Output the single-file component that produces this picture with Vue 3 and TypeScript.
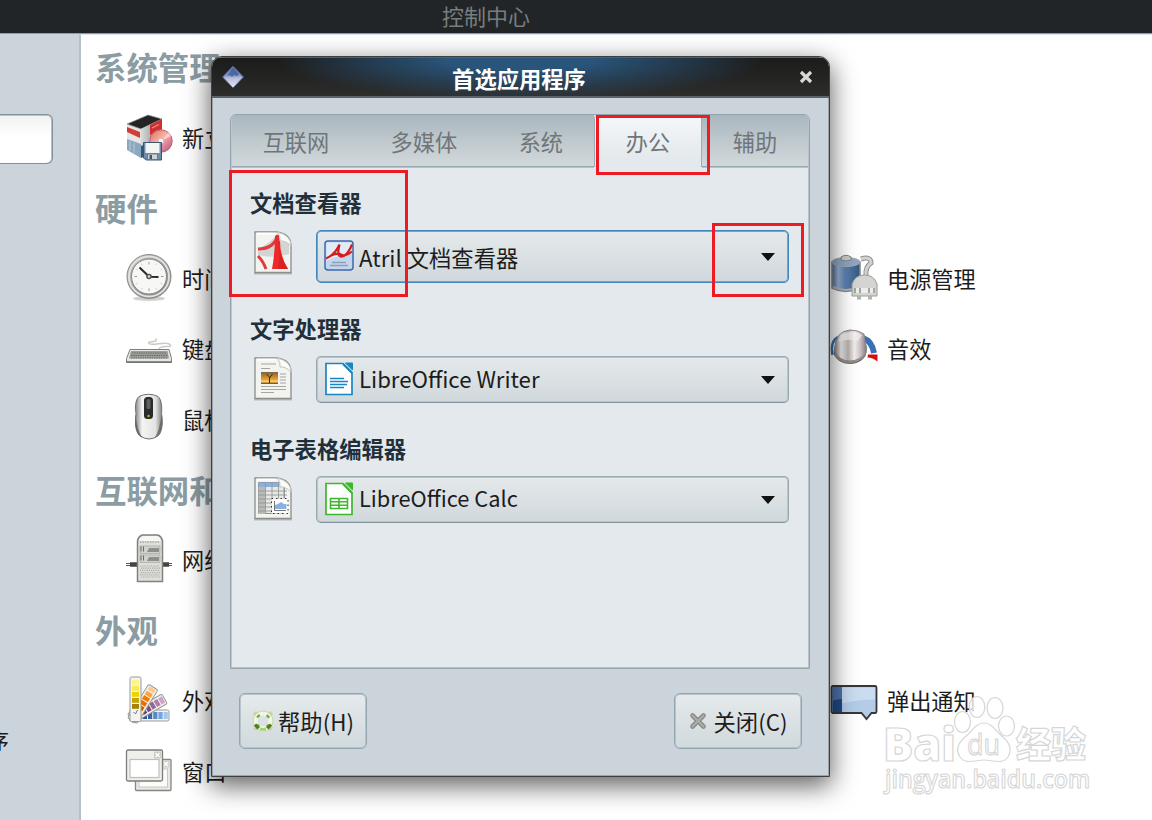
<script setup lang="ts">
interface Entry { label: string; icon: string }
interface Row { heading?: string; left?: Entry; right?: Entry }

const rows: Row[] = [
  { heading: '系统管理' },
  { left: { label: '新立', icon: 'package' } },
  { heading: '硬件' },
  { left: { label: '时间', icon: 'clock' }, right: { label: '电源管理', icon: 'power' } },
  { left: { label: '键盘', icon: 'keyboard' }, right: { label: '音效', icon: 'sound' } },
  { left: { label: '鼠标', icon: 'mouse' } },
  { heading: '互联网和' },
  { left: { label: '网络', icon: 'network' } },
  { heading: '外观' },
  { left: { label: '外观', icon: 'theme' }, right: { label: '弹出通知', icon: 'notify' } },
  { left: { label: '窗口', icon: 'windows' } },
]

const entriesOf = (r: Row): Entry[] => [r.left, r.right].filter((e): e is Entry => !!e)

const swatches = [
  { angle: 90, colors: ['#2a4f8d', '#3465a4', '#5888c5', '#75a3db', '#a4c7ef'] },
  { angle: 60, colors: ['#5c3566', '#75507b', '#906a99', '#ad7fa8', '#caa5c8'] },
  { angle: 32, colors: ['#ce5c00', '#e66f00', '#f57900', '#fca347', '#fdc98d'] },
  { angle: 0, colors: ['#a48200', '#c7a300', '#edd400', '#fce94f', '#fff38b'] },
]

const tabs = ['互联网', '多媒体', '系统', '办公', '辅助']
const activeTab = '办公'

const sections = [
  { title: '文档查看器', app: 'Atril 文档查看器', kind: 'pdf', focused: true },
  { title: '文字处理器', app: 'LibreOffice Writer', kind: 'writer', focused: false },
  { title: '电子表格编辑器', app: 'LibreOffice Calc', kind: 'calc', focused: false },
]
</script>

<template>
  <div class="screen">
    <svg class="defs" width="0" height="0">
      <defs>
        <linearGradient id="metal" x1="0" y1="0" x2="1" y2="1"><stop offset="0" stop-color="#c9cac8" /><stop offset=".5" stop-color="#9c9e9b" /><stop offset="1" stop-color="#7b7e7a" /></linearGradient>
        <linearGradient id="mouseBody" x1="0" y1="0" x2="1" y2="0"><stop offset="0" stop-color="#858985" /><stop offset=".25" stop-color="#f4f4f3" /><stop offset=".75" stop-color="#e3e3e2" /><stop offset="1" stop-color="#7a7e7b" /></linearGradient>
        <linearGradient id="battery" x1="0" y1="0" x2="1" y2="0"><stop offset="0" stop-color="#4a6d9d" /><stop offset=".22" stop-color="#9bb3d2" /><stop offset=".45" stop-color="#5e83b5" /><stop offset="1" stop-color="#33577f" /></linearGradient>
        <linearGradient id="knob" x1="0" y1="0" x2="1" y2="0"><stop offset="0" stop-color="#858280" /><stop offset=".2" stop-color="#eceae8" /><stop offset=".42" stop-color="#b3aeab" /><stop offset=".62" stop-color="#f1efed" /><stop offset=".82" stop-color="#c7b8c2" /><stop offset="1" stop-color="#777471" /></linearGradient>
        <linearGradient id="disc" x1="0" y1="0" x2="1" y2="1"><stop offset="0" stop-color="#e0665f" /><stop offset=".45" stop-color="#f5b5a0" /><stop offset=".65" stop-color="#e58b9b" /><stop offset="1" stop-color="#a54f86" /></linearGradient>
        <linearGradient id="boxSide" x1="0" y1="0" x2="1" y2="0"><stop offset="0" stop-color="#d9dada" /><stop offset="1" stop-color="#7d7f80" /></linearGradient>
        <linearGradient id="sunset" x1="0" y1="0" x2="0" y2="1"><stop offset="0" stop-color="#7b633c" /><stop offset=".6" stop-color="#e99b2d" /><stop offset=".8" stop-color="#ffce62" /><stop offset="1" stop-color="#54401f" /></linearGradient>
        <linearGradient id="gem" x1="0" y1="0" x2="0" y2="1"><stop offset="0" stop-color="#5f76ae" /><stop offset=".45" stop-color="#8d9bc6" /><stop offset=".55" stop-color="#b6bedb" /><stop offset="1" stop-color="#e4e7f2" /></linearGradient>
      </defs>
    </svg>

    <header class="topbar">控制中心</header>
    <div class="body">
      <aside class="side">
        <div class="search"></div>
        <div class="side-link">序</div>
      </aside>
      <main class="panel">
        <div v-for="(r, i) in rows" :key="i" class="row">
          <h2 v-if="r.heading" class="group">{{ r.heading }}</h2>
          <template v-else>
            <div v-for="e in entriesOf(r)" :key="e.label" class="entry">
              <svg class="ico" viewBox="0 0 48 48" width="48" height="48">
                <g v-if="e.icon === 'package'">
                  <path d="M2 10L16 15V44L2 36z" fill="#e4e5e5" /><path d="M2 10L23 1l14 4-21 10z" fill="#242424" stroke="#999" stroke-width=".7" />
                  <path d="M16 15L37 5v27L16 44z" fill="url(#boxSide)" /><path d="M2 13l13 5v6L2 18z" fill="#d33b37" /><path d="M25 11l12-6v10l-12 6z" fill="#cf2f2e" /><path d="M27 14l7-3.500" stroke="#ef8d88" stroke-width="1.200" />
                  <path d="M2 25l14 5v14L2 36z" fill="#8ca8c1" /><path d="M16 32l12-5v12l-12 5z" fill="#35597c" /><path d="M5 27v10M9 29v10" stroke="#b8c9d7" />
                  <circle cx="36" cy="27" r="11.2" fill="url(#disc)" stroke="#bd6275" /><path d="M36 27l10-5-2-4z" fill="#fff" opacity=".5" /><circle cx="36" cy="27" r="3" fill="#fbeff0" stroke="#dca7b0" />
                  <path d="M18.500 28.500h18v17.500h-15l-3-2z" fill="#6f8dab" stroke="#3c566f" /><path d="M20.500 29h14v10H20.500z" fill="#f3f4f4" /><path d="M22.500 40h10v5.500h-10z" fill="#cfd3d5" stroke="#536577" stroke-width=".7" /><path d="M24.500 41h2.500v4h-2.500z" fill="#40566d" />
                </g>
                <g v-else-if="e.icon === 'clock'">
                  <ellipse cx="24" cy="44.500" rx="16" ry="2.500" fill="#000" opacity=".18" /><circle cx="24" cy="22.500" r="22" fill="url(#metal)" stroke="#8b8d8a" /><circle cx="24" cy="22.500" r="20" fill="none" stroke="#e1e2e0" stroke-width="2" /><circle cx="24" cy="22.500" r="17.500" fill="#f7f7f5" stroke="#858783" />
                  <path d="M24 8v2.500M24 34.500v2.500M9.500 22.500h2.500M36 22.500h2.500" stroke="#999" /><path d="M16.500 9.500l.8 1.400M31.500 9.500l-.8 1.400M11 15l1.400.8M37 15l-1.400.8M11 30l1.400-.8M37 30l-1.400-.8M16.500 35.500l.8-1.400M31.500 35.500l-.8-1.400" stroke="#ccc" />
                  <path d="M24 22.500L14.500 13.500M24 22.800L33.500 23" stroke="#252b2d" stroke-width="2" /><circle cx="24" cy="22.500" r="2.800" fill="#555" /><circle cx="24" cy="22.500" r="1.200" fill="#ddd" />
                </g>
                <g v-else-if="e.icon === 'keyboard'">
                  <path d="M34 24c2-5 14 0 11-4.500-3-4-18 2-21-1-2-3 9 0 7-5" fill="none" stroke="#c8cac5" stroke-width="1.500" />
                  <path d="M5 24.500h39l2.500 9v4h-45v-4z" fill="#e7e8e4" stroke="#7c7f7b" /><path d="M6 26h36.500l1.500 7.500H4z" fill="#9b9d99" /><path d="M7 28h35M6 30.500h37M6 33h37" stroke="#6a6d69" stroke-dasharray="1.500 .8" /><path d="M1.500 37h45" stroke="#6c6f6b" stroke-width="1.500" />
                </g>
                <g v-else-if="e.icon === 'mouse'">
                  <path d="M14 1.500Q23.500-3 33 1.500c4 3 4 13 3.500 17 2 10 0 19-3 22q-9.500 7-19 0c-3-3-5-12-3.500-22C10 14 10 5 14 1.500z" fill="url(#mouseBody)" stroke="#6d716e" /><path d="M10.500 20q2 16 7 23-7-3-7.500-14zM36.500 20q-2 16-7 23 7-3 7.500-14z" fill="#5f6763" opacity=".8" />
                  <rect x="19" y="2" width="9" height="22" rx="3.500" fill="#2a2c2b" /><rect x="21.500" y="4" width="4" height="10" rx="1.500" fill="#5d605f" /><circle cx="23.500" cy="21" r="1.200" fill="#c8ae1d" />
                </g>
                <g v-else-if="e.icon === 'network'">
                  <path d="M1 27.500h11M1 29.500h11M37 27.500h10M37 29.500h10" stroke="#555854" /><path d="M5 28.500h7M37 28.500h7" stroke="#424642" stroke-width="4.500" />
                  <path d="M12.500 5q1-5 5-6h15q4 1 5 6v40.500h-25z" fill="#dedfda" stroke="#80827d" stroke-width="1.500" /><path d="M14 5q1-4 4-5h14q3 1 4 5z" fill="#f6f6f3" /><path d="M15 6h20" stroke="#8f918d" stroke-dasharray="1.500 1" />
                  <path d="M15 10h20v7.500H15zM15 19h20v7.500H15z" fill="#d0d2cc" stroke="#a5a7a2" stroke-width=".7" /><path d="M16 10.500v5M18.500 10.500v5M16 19.500v5M18.500 19.500v5" stroke="#676a65" /><path d="M22 16l2-4h10v4zM22 25l2-4h10v4z" fill="#8d908a" />
                  <path d="M15 30h20M16 32.200h19M15 34.400h20M16 36.600h19M15 38.800h20M16 41h19" stroke="#a9aba6" stroke-width="1.200" stroke-dasharray="1.200 1" />
                </g>
                <g v-else-if="e.icon === 'theme'">
                  <g v-for="s in swatches" :key="s.angle" :transform="`rotate(${s.angle} 10.500 38.500)`">
                    <rect x="5" :y="s.angle ? 5 : 0" width="11" :height="s.angle ? 39.5 : 44.500" rx="1.500" fill="#f3f3ef" stroke="#999b96" /><rect v-for="(c, j) in s.colors" :key="c" x="7" :y="27 - j * (s.angle ? 5.2 : 6)" width="7" :height="s.angle ? 4.2 : 4.800" :fill="c" />
                  </g>
                  <path d="M8.500 35l2 2 2-4" fill="none" stroke="#777" />
                </g>
                <g v-else-if="e.icon === 'windows'">
                  <rect x="10.500" y="12.500" width="35.500" height="31" rx="1" fill="#e8e9e5" stroke="#848681" stroke-width="1.300" /><rect x="14" y="22" width="28.500" height="18" fill="#fcfcfb" stroke="#c7c8c2" /><rect x="38" y="13.500" width="6.500" height="7" fill="#d2d3cd" /><path d="M39 15l4 4m0-4l-4 4" stroke="#fff" stroke-width="1.300" />
                  <rect x="1.500" y="3" width="36" height="31" rx="1.500" fill="#eeefeb" stroke="#7b7d78" stroke-width="1.300" /><rect x="5" y="12.500" width="29" height="18" fill="#fff" stroke="#bfc1b9" stroke-width="1.200" /><rect x="29" y="4.500" width="7" height="7" fill="#cbccc6" /><path d="M30.500 6l4 4m0-4l-4 4" stroke="#fff" stroke-width="1.300" />
                </g>
                <g v-else-if="e.icon === 'power'">
                  <path d="M31 5q10-3 10 4-6 4-5 13" fill="none" stroke="#8c8e8b" stroke-width="5" /><path d="M31 5q10-3 10 4-6 4-5 13" fill="none" stroke="#d1d2cf" stroke-width="3" />
                  <path d="M2 8q14-7 28 0v26q-14 7-28 0z" fill="url(#battery)" stroke="#86898a" stroke-width="1.500" /><ellipse cx="16" cy="8" rx="14" ry="4.500" fill="#8ea6c5" stroke="#a6abad" /><path d="M3 33q13 6 26 0" stroke="#aeb2b2" stroke-width="2" fill="none" /><path d="M11 3q5-3.500 10 0v3q-5 2-10 0z" fill="#c8cac9" stroke="#7f8280" />
                  <path d="M22 42V30q3-9 12.500-9T47 30v12z" fill="#d4d5d2" stroke="#9a9c98" /><path d="M24 34h21v5h-21z" fill="#a3a5a1" /><path d="M26 34h3v5h-3zM31 34h7v5h-7zM40 34h3v5h-3z" fill="#ededeb" /><path d="M27 42h4v3.500h-4zM38 42h4v3.500h-4z" fill="#b2b4b0" />
                </g>
                <g v-else-if="e.icon === 'sound'">
                  <path d="M2.500 30Q0 16 8 12" fill="none" stroke="#386eac" stroke-width="2.500" /><path d="M33 13q9 3 11 15" fill="none" stroke="#386fb5" stroke-width="6" /><path d="M38 29.500l9.500 0v7q-5-4-10-4z" fill="#d6100e" />
                  <ellipse cx="20" cy="27" rx="16" ry="11.500" fill="#92908d" stroke="#6e6c69" /><path d="M4.500 25Q5 6 20 5q8 0 14 4l1 8q3 6 1 11-7 8-16 8-12 0-15.500-11z" fill="url(#knob)" stroke="#8b8885" /><path d="M8 17Q10 7 20 7q8 0 12 3-2 3-4 6-9-3-20 1z" fill="#f5f3f0" opacity=".65" />
                </g>
                <g v-else>
                  <path d="M3 9h42q1.500 0 1.500 2v23q0 2-1.500 2h-3.500l-5 6-5-6H3q-1.500 0-1.500-2V11q0-2 1.500-2z" fill="#b4cce8" stroke="#34383b" stroke-width="1.800" /><path d="M12 10.500h33v12q-17 0-33 4z" fill="#c9dcf0" /><path d="M2.500 10h9.500v25H2.500z" fill="#204a87" /><path d="M2.500 10h9.500v12q-5 0-9.500 2z" fill="#4f73a9" />
                </g>
              </svg>
              <span>{{ e.label }}</span>
            </div>
          </template>
        </div>
      </main>
    </div>

    <section class="dialog">
      <div class="titlebar">
        <svg class="gem" width="24" height="24" viewBox="0 0 24 24"><path d="M12 1l10.500 11L12 23 1.500 12z" fill="url(#gem)" stroke="#4d5680" /><path d="M12 2.500l6 6.500-2 2-3-1-2 2-2-2-3 1z" fill="#4a67a4" /></svg>
        <span>首选应用程序</span>
        <svg class="x" width="14" height="14" viewBox="0 0 14 14"><path d="M2 2l10 10M12 2L2 12" stroke="#d8d8d8" stroke-width="3.200" /></svg>
      </div>
      <div class="content">
        <div class="notebook">
          <nav class="tabs">
            <div v-for="t in tabs" :key="t" class="tab" :class="{ active: t === activeTab, wide: t.length === 3 }">{{ t }}</div>
          </nav>
          <div class="page">
            <div v-for="s in sections" :key="s.kind" class="section" :class="{ focused: s.focused }">
              <h3>{{ s.title }}</h3>
              <div class="choice">
                <svg class="doc" width="40" height="46" viewBox="0 0 40 46">
                  <path d="M1 42.500h38v2H1z" fill="#000" opacity=".2" />
                  <path d="M2 2h22q14 2 14 14v26.500H2z" fill="#f3f3f0" stroke="#8b8e89" stroke-width="1.300" /><path d="M3.500 3.500h20" stroke="#fff" stroke-width="2" />
                  <g v-if="s.kind === 'pdf'"><path d="M5 19q15-8 18-14 5 9 13 7v12q-15 5-31 1z" fill="#d4d5d3" /><path d="M25 5q-4 14-20 14M5 26q5 5 8 13" fill="none" stroke="#e13b3b" stroke-width="3" /><path d="M22 6q4-3 5 5 0 15 8 28H19Q22 23 22 6z" fill="#ee2929" /><path d="M25 12q3 14 0 27h10q-9-13-9-27z" fill="#d82323" /></g>
                  <g v-else-if="s.kind === 'writer'"><path d="M8 8h15M8 12.500h9M27 18h6M27 21h6M27 24h6M27 27h6M8 30.500h25M8 33.500h25M8 36.500h13" stroke="#a4a6a3" /><rect x="8" y="16" width="17" height="12" fill="url(#sunset)" /><path d="M16.500 27v-6l-3-3m3 4l3-4" stroke="#342914" fill="none" /></g>
                  <g v-else><path d="M5.500 6.500h21l5 5v26h-26z" fill="#e8e9e7" stroke="#8d908d" /><path d="M5.500 6.500h21v4.500h-21z" fill="#8cafdc" /><path d="M5.500 11h7v27h-7z" fill="#b9bbb8" /><path d="M5 15h29M5 19h29M5 23h29M5 27h14M5 31h14M5 35h14M12.500 7v31M19 7v31M25.500 7v16M31 11v12" stroke="#959895" stroke-width=".9" /><rect x="18.500" y="22.500" width="16.500" height="15" fill="#fff" stroke="#333" stroke-dasharray="1.500 3" /><path d="M22 33v-4l3-1 3-2 3 2h2.500v5z" fill="#8ab1df" /><path d="M21.500 25v9.500h11.500" fill="none" stroke="#777" /></g>
                  <path d="M24 2q4 4 3 9 5-1 11 5Q38 5 24 2z" fill="#fbfbf9" stroke="#c2c4c0" />
                </svg>
                <div class="combo">
                  <svg v-if="s.kind === 'pdf'" class="app" width="30" height="34" viewBox="0 0 30 34"><rect x="1" y="2" width="28" height="29" rx="3" fill="#c4d6ee" stroke="#3b6aae" stroke-width="1.500" /><path d="M2.500 3.500h25v11q-12 2-25 7z" fill="#e3ebf6" /><path d="M2 19.500C8 17 13 11 15.500 5.500 14 12 13 18 18 17.500 22 17 26 11 28 5.500M7 16.500q7-3 10-1 4 2.500 11-3" fill="none" stroke="#d61d1d" stroke-width="2.200" /><path d="M8 23.500h14M6 26.500h18" stroke="#8d9fb7" stroke-width="1.500" /></svg>
                  <svg v-else class="app" width="30" height="34" viewBox="0 0 30 34" :class="s.kind"><path d="M2 1.500h17l9 9V32.500H2z" fill="#fff" stroke="currentColor" stroke-width="1.700" /><path d="M21.500 1h7v7z" fill="currentColor" stroke="currentColor" /><path d="M19 2l9 9" stroke="currentColor" stroke-width="2" />
                    <path v-if="s.kind === 'writer'" d="M6 16.500h14M6 19.500h18M6 22.500h17M6 25.500h14" stroke="currentColor" stroke-width="1.500" />
                    <path v-else d="M6.500 16.500h17v10h-17zM6.500 19.800h17M6.500 23.200h17M15 16.500v10" fill="none" stroke="currentColor" stroke-width="1.600" /></svg>
                  <span :class="`name-${s.kind}`">{{ s.app }}</span>
                  <svg class="arrow" width="16" height="10" viewBox="0 0 16 10"><path d="M1 1h14L8 9z" fill="#111" /></svg>
                </div>
              </div>
            </div>
          </div>
        </div>
        <footer class="actions">
          <button>
            <svg width="22" height="22" viewBox="0 0 22 22"><path d="M2 5l3-3M17 2l3 3M2 17l3 3M20 17l-3 3" stroke="#e3c3a5" stroke-width="3" /><circle cx="11" cy="11" r="7.700" fill="none" stroke="#eef7e3" stroke-width="4.600" /><circle cx="11" cy="11" r="10" fill="none" stroke="#c3dba6" /><circle cx="11" cy="11" r="6.800" fill="none" stroke="#73a83f" stroke-width="2.400" stroke-dasharray="3.600 7.080" stroke-dashoffset="-3.540" /><path d="M3 14.500l3.500 4M19 14.500l-3.500 4" stroke="#4b7d24" stroke-width="3" /><path d="M8 18.800q3 1 6 0" fill="none" stroke="#a5d175" stroke-width="2.500" /></svg>
            <span>帮助(H)</span>
          </button>
          <button>
            <svg width="18" height="18" viewBox="0 0 18 18"><path d="M3.500 3.500l11 11M14.500 3.500l-11 11" stroke="#888a85" stroke-width="4.600" stroke-linecap="round" /><path d="M3.500 3.500l11 11M14.500 3.500l-11 11" stroke="#aaaca6" stroke-width="2.300" stroke-linecap="round" /></svg>
            <span class="close-label">关闭(C)</span>
          </button>
        </footer>
      </div>
    </section>

    <div class="mark tab-mark"></div>
    <div class="mark viewer-mark"></div>
    <div class="mark arrow-mark"></div>

    <svg class="watermark" width="220" height="110" viewBox="0 0 220 110">
      <g fill="#fff" stroke="#d6d6d6" stroke-width="1.200">
        <g fill-opacity=".8"><ellipse cx="82.500" cy="32" rx="8" ry="10.500" /><ellipse cx="97" cy="17" rx="7.800" ry="10.500" /><ellipse cx="115" cy="18" rx="8" ry="10.500" /><ellipse cx="126.500" cy="36" rx="8" ry="10" /></g>
        <path d="M104 33c-9 0-12 9-19 14-8 7-9 14-5 20 6 8 16 3 24 3s18 5 24-3c4-7 2-14-5-20-7-5-10-14-19-14z" />
        <text x="3" y="71" class="wm-brand" textLength="73" lengthAdjust="spacingAndGlyphs">Bai</text>
        <text x="87" y="65" class="wm-du" textLength="33" lengthAdjust="spacingAndGlyphs">du</text>
        <text x="136" y="68" class="wm-cn" textLength="70" lengthAdjust="spacingAndGlyphs">经验</text>
        <text x="5" y="98" class="wm-url" textLength="205" lengthAdjust="spacingAndGlyphs">jingyan.baidu.com</text>
      </g>
    </svg>
  </div>
</template>

<style>
body { overflow: hidden; }
</style>

<style scoped>
* { box-sizing: border-box; }
.screen { position: relative; width: 1152px; height: 820px; overflow: hidden; background: #fff; font: 22px/32px "Noto Sans CJK SC", "Noto Sans", sans-serif; color: #1c1c1c; display: flex; flex-direction: column; }
.defs { position: absolute; }
.topbar { flex: none; height: 33px; background: #212527; color: #7a7d7e; text-align: center; padding-right: 180px; line-height: 30px; }
.body { flex: 1; display: flex; min-height: 0; border-top: 1px solid #8e9da5; }
.side { flex: none; width: 79px; background: #ccd4db; padding-top: 80px; display: flex; flex-direction: column; }
.search { width: 53px; height: 50px; border: 1px solid #80919b; border-left: 0; border-radius: 0 6px 6px 0; background: linear-gradient(#f1f1f1, #fff 45%); box-shadow: inset -1px 0 #b4bfc6, inset 0 1px #b9c2c8; }
.side-link { margin: 559px 0 0 -13px; }
.panel { flex: 1; border-left: 2px solid #b4c1c9; border-top: 1px solid #dfe4f2; background: #fff; }
.row { height: 70.4px; display: flex; align-items: center; }
.row:first-child { height: 68.400px; }
.group { margin: 0 0 2px 14px; font-size: 31.400px; line-height: 44px; font-weight: 700; color: #8b9ca3; white-space: nowrap; }
.row:first-child .group { margin-bottom: 5px; }
.entry { display: flex; align-items: center; gap: 9px; width: 704px; padding-left: 44px; flex: none; }
.entry + .entry { padding-left: 45px; }
.ico { flex: none; margin-bottom: 2px; overflow: visible; }
.entry span { margin-bottom: 3px; white-space: nowrap; font-size: 22.200px; }
.dialog { position: absolute; left: 211px; top: 56px; width: 619px; height: 721px; border: 1px solid #3c4041; border-radius: 11px 11px 0 0; background: #ccd4db; box-shadow: 0 8px 26px 1px rgba(0,0,0,.62); display: flex; flex-direction: column; overflow: hidden; }
.titlebar { flex: none; height: 41px; display: flex; align-items: center; justify-content: space-between; padding: 0 16px 0 9px; border-top: 1px solid #53616a; border-bottom: 2px solid #5d6366; background: radial-gradient(ellipse 245px 42px at 50% 0, #29557b 0, #29557b 30%, rgba(41,85,123,0) 100%), linear-gradient(#1b1b1a, #2d2d2c); color: #fff; font-weight: 700; font-size: 22.300px; }
.titlebar span { margin: 2px 6px 0 0; }
.content { flex: 1; padding: 16px 17px 0; display: flex; flex-direction: column; border: 1px solid #9ca2a5; border-top: 0; }
.notebook { height: 555px; width: 580px; border: 1px solid #93a4ad; border-radius: 6px 6px 0 0; background: #e4e9ed; box-shadow: inset 1px 0 #bcc8cf, inset -1px -1px #b6c2c9; display: flex; flex-direction: column; overflow: hidden; }
.tabs { flex: none; height: 52px; display: flex; padding: 0 1px; }
.tab { flex: 107 1 0; display: flex; align-items: center; justify-content: center; color: #707678; font-size: 22.200px; background: linear-gradient(#aab7be, #d2d9dc); border-bottom: 1px solid #98a9b2; box-shadow: 0 1px #b6c2c9; }
.tab.wide { flex-grow: 129; }
.tab.active { background: linear-gradient(#f6f8f9, #e4e9ed 80%); border: 1px solid #9eadb5; border-width: 0 1px; border-radius: 4px 4px 0 0; box-shadow: none; padding-bottom: 1px; }
.page { padding: 19px 20px 0 19px; display: flex; flex-direction: column; gap: 31px; }
.section { height: 89px; display: flex; flex-direction: column; }
.section.focused { height: 95px; }
h3 { flex: none; margin: 0; font-size: 22.300px; line-height: 33px; height: 44px; font-weight: 700; color: #1f303b; }
.choice { display: flex; align-items: flex-start; justify-content: space-between; }
.doc { margin-left: 3px; }
.combo { width: 473px; height: 47px; border: 1px solid #97a8b0; border-bottom-color: #82939c; border-radius: 5px; background: linear-gradient(#e5e9eb, #d0d8dc); box-shadow: inset 0 0 0 1px #b9c5cb; display: flex; align-items: center; padding: 0 12px 0 7px; }
.combo span { margin-bottom: 3px; }
.focused .combo { height: 53px; border-color: #4387bd; box-shadow: inset 0 0 0 1px #6fa4cd; }
.focused .combo span { margin-bottom: 0; font-size: 22.300px; }
.name-writer { font-size: 22.200px; }
.name-calc { font-size: 21.800px; }
.app { flex: none; margin: 0 5px 2px 0; }
.writer { color: #1b84c1; }
.calc { color: #3db72b; }
.arrow { margin-left: auto; }
.actions { padding: 24px 9px 0; display: flex; justify-content: space-between; }
button { width: 128px; height: 56px; padding: 0; border: 1px solid #94a6af; border-radius: 6px; background: linear-gradient(#e6eaec, #d0d9dc); box-shadow: inset 0 0 0 1px #b7c3ca; font: inherit; font-size: 22.300px; color: #1c1c1c; display: flex; align-items: center; justify-content: center; gap: 4px; white-space: nowrap; }
.close-label { margin-left: 3px; }
.mark { position: absolute; border: 3px solid #ed1c24; }
.tab-mark { left: 596px; top: 115px; width: 114px; height: 60px; }
.viewer-mark { left: 229px; top: 170px; width: 179px; height: 127px; }
.arrow-mark { left: 712px; top: 223px; width: 92px; height: 74px; }
.watermark { position: absolute; left: 880px; top: 690px; }
.wm-brand { font: 800 46px "Open Sans", sans-serif; }
.wm-du { font: 500 30px "Open Sans", sans-serif; }
.wm-cn { font: 900 36px "Noto Sans CJK SC", sans-serif; }
.wm-url { font: 600 26px "Open Sans", sans-serif; }
</style>
